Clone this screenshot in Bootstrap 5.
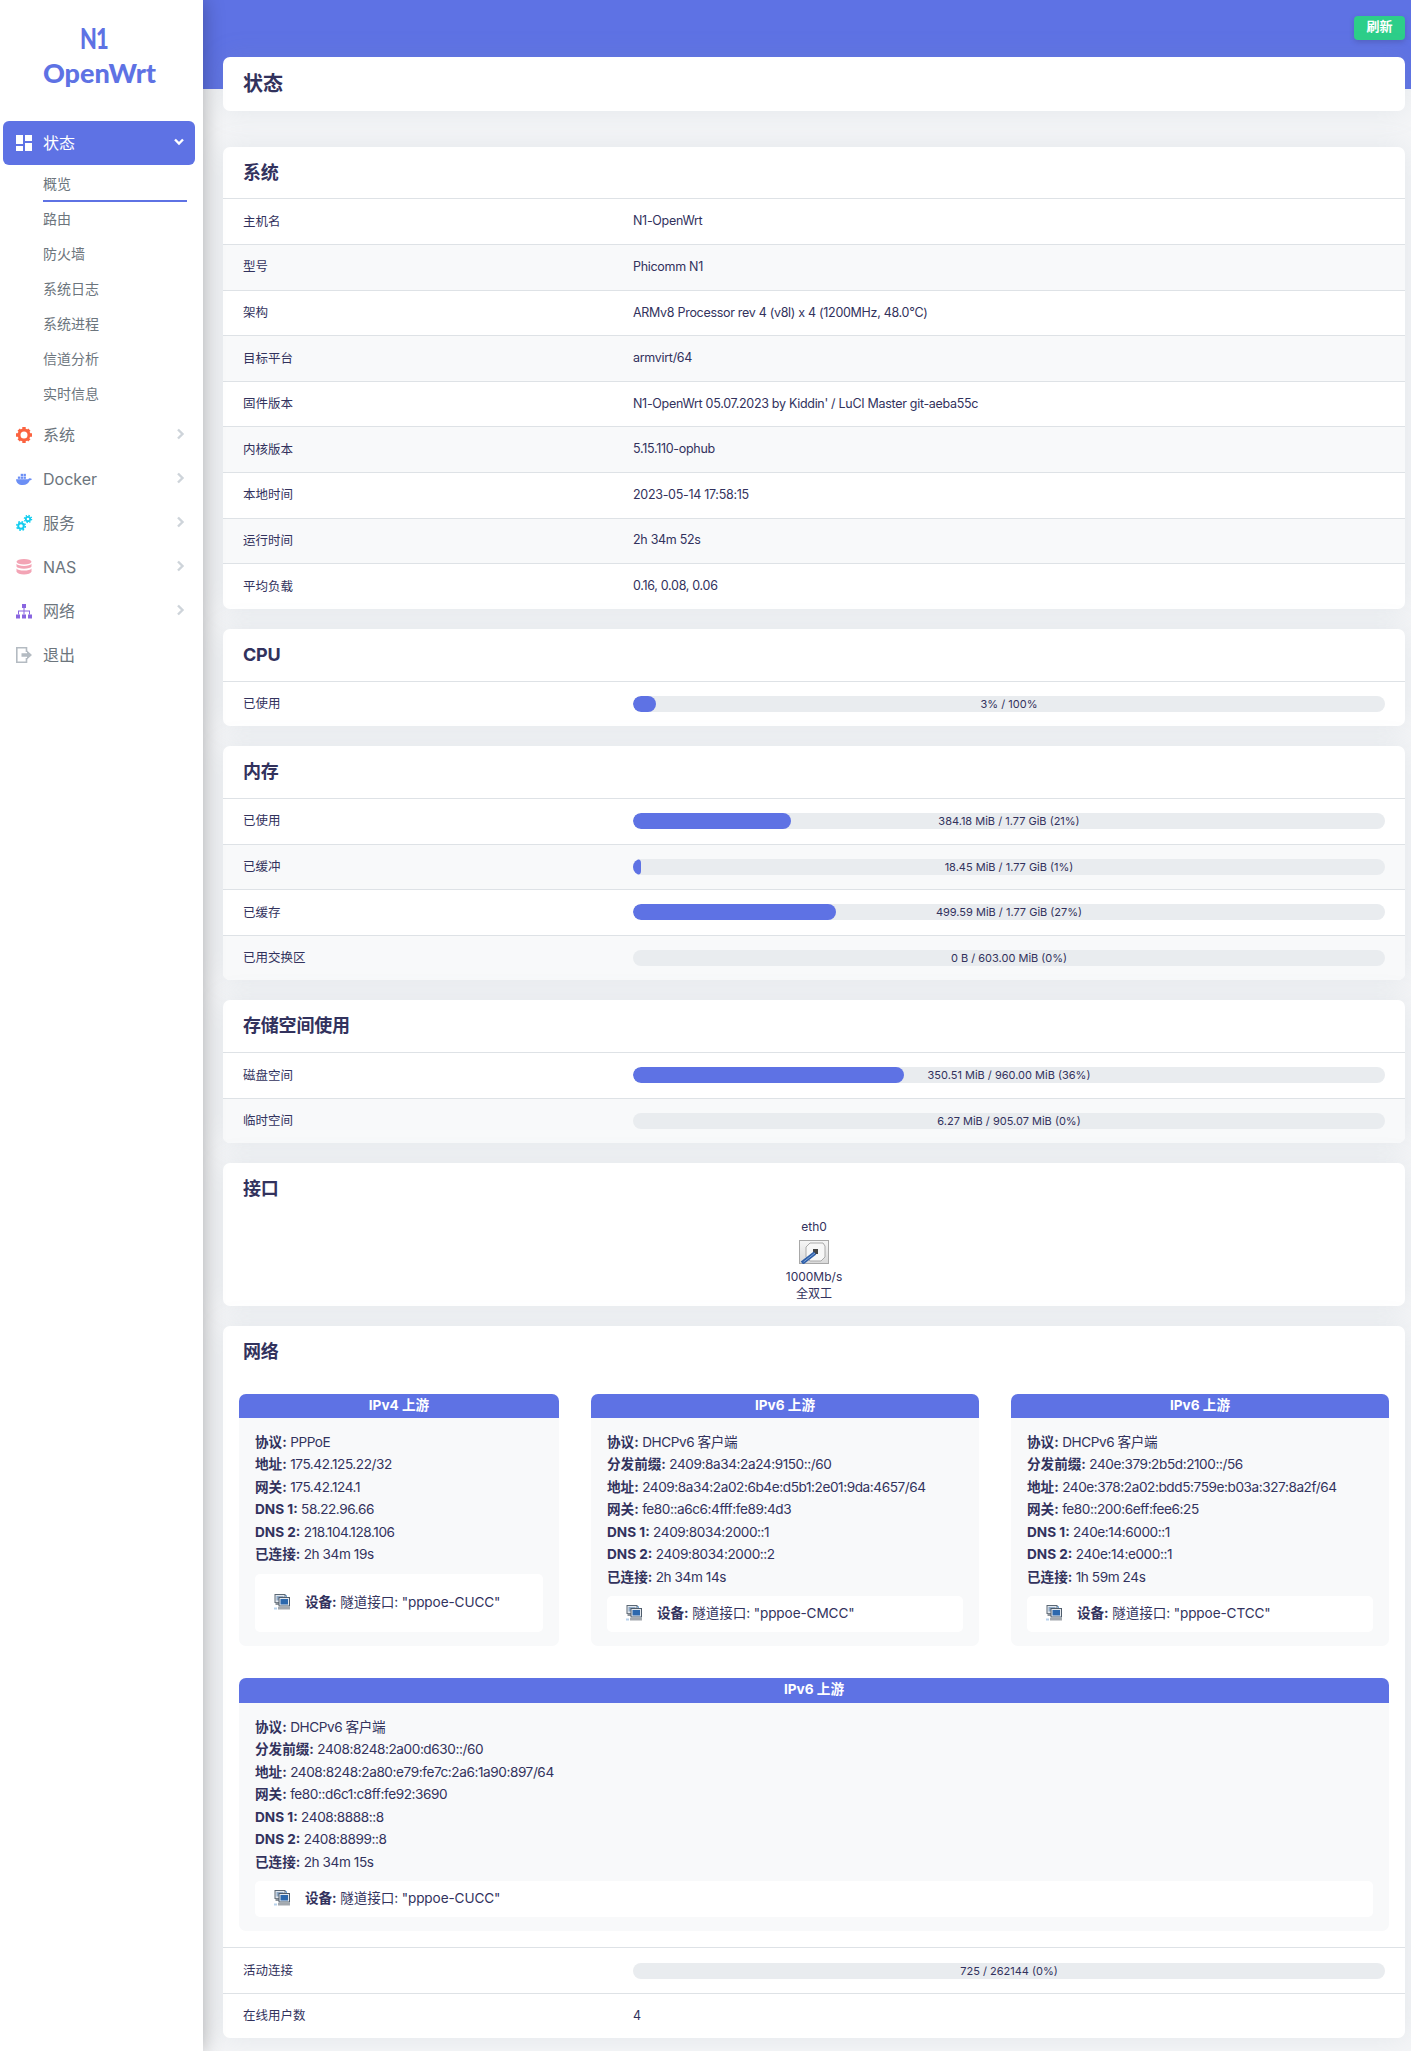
<!DOCTYPE html>
<html lang="zh-CN">
<head>
    <meta charset="UTF-8">
    <meta name="viewport" content="width=device-width, initial-scale=1.0">
    <title>N1-OpenWrt - 概览 - LuCI</title>
    <link href="https://cdn.jsdelivr.net/npm/bootstrap@5.3.0/dist/css/bootstrap.min.css" rel="stylesheet">
    <style>
        body {
            font-family: Inter, "Noto Sans CJK SC", sans-serif;
            background-color: #f4f5f7;
            color: #32325d;
            font-size: 12.5px;
            min-height: 2051px;
        }
        .side-panel {
            width: 203px;
            flex: none;
            background: #fff;
            box-shadow: 0 0 20px rgba(0, 0, 0, .3);
            z-index: 2;
        }
        .brand-box {
            height: 121px;
            padding-top: 24px;
            color: #5e72e4;
            font-family: Lato, "Noto Sans CJK SC", sans-serif;
            font-weight: 900;
            text-align: center;
            line-height: 1;
        }
        .brand-n1 { display: inline-block; font-size: 28px; letter-spacing: -1px; transform: scaleX(.78); margin-left: -16px; }
        .brand-name { font-size: 27px; margin-top: 7px; padding-right: 4px; }
        .side-link {
            display: flex;
            align-items: center;
            height: 44px;
            padding: 0 16px;
            color: #6c757d;
            font-size: 16px;
        }
        .side-link svg.side-icon { width: 16px; height: 16px; flex: none; margin-right: 11px; overflow: visible; }
        .side-link svg.side-arrow { width: 10px; height: 12px; margin-left: auto; margin-right: 2px; margin-top: -3px; }
        .side-link.active-group {
            margin: 0 8px 0 3px;
            padding: 0 9px 0 13px;
            background: #5e72e4;
            color: #fff;
            border-radius: 6px;
        }
        .sub-links { padding: 1px 0 2px 43px; }
        .sub-link {
            display: block;
            height: 35px;
            line-height: 35px;
            color: #6c757d;
            font-size: 14px;
        }
        .sub-link.current { width: 144px; height: 36px; margin-bottom: -1px; border-bottom: 2px solid #5e72e4; }
        .main-area {
            flex: 1 1 0;
            min-width: 0;
            padding: 16px 6px 13px 20px;
            background: linear-gradient(#5e72e4 89px, transparent 89px);
        }
        .refresh-btn {
            display: block;
            width: 51px;
            height: 24px;
            margin: 0 0 17px auto;
            padding: 0 0 2px;
            border: 0;
            border-radius: 4px;
            background: #2dce89;
            color: #fff;
            font-size: 13px;
            font-weight: 700;
            box-shadow: 0 2px 5px rgba(50, 50, 93, .25);
        }
        .panel {
            border: 0;
            border-radius: 7px;
            margin-bottom: 20px;
            box-shadow: 0 0 28px rgba(136, 152, 170, .15);
            overflow: hidden;
        }
        .page-title {
            height: 54px;
            margin-bottom: 35.6px;
            padding: 0 20px;
            font-size: 20px;
            font-weight: 700;
            line-height: 54px;
        }
        .panel-title {
            height: 51.8px;
            padding: 0 20px;
            font-size: 18px;
            font-weight: 700;
            line-height: 51.8px;
            letter-spacing: -.2px;
        }
        .info-row {
            display: flex;
            align-items: center;
            height: 45.6px;
            padding: 0 20px 0 20px;
            border-top: 1px solid #dee2e6;
        }
        .info-rows .info-row:nth-child(even) { background: #f8f9fa; }
        .info-key { width: 390px; flex: none; padding-top: 1px; }
        .info-val { flex: 1 1 0; min-width: 0; letter-spacing: -.3px; }
        .usage-bar {
            position: relative;
            height: 16px;
            border-radius: 8px;
            background: #e9ecef;
        }
        .usage-bar .progress-bar { background: #5e72e4; border-radius: 8px; }
        .usage-label {
            position: absolute;
            inset: 0;
            text-align: center;
            font-size: 11px;
            line-height: 16px;
            letter-spacing: 0;
        }
        .iface-box {
            height: 90.6px;
            padding-top: 3px;
            text-align: center;
            font-size: 12px;
            line-height: 17px;
        }
        .iface-box svg { display: block; width: 30px; height: 24px; margin: 5px auto 4px; }
        .wan-area { padding: 16.4px 16px 16px; display: flex; flex-wrap: wrap; gap: 32px; }
        .wan-box { display: flex; flex-direction: column; background: #f8f9fa; border-radius: 7px; overflow: hidden; }
        .wan-v4 { flex: 320 1 0; }
        .wan-v6a { flex: 388 1 0; }
        .wan-v6b { flex: 378 1 0; }
        .wan-full { flex: 0 0 100%; }
        .wan-head {
            height: 24px;
            background: #5e72e4;
            color: #fff;
            font-size: 13.6px;
            font-weight: 700;
            line-height: 22px;
            text-align: center;
        }
        .wan-full .wan-head { height: 25px; line-height: 22px; }
        .wan-body { flex: 1 1 auto; display: flex; flex-direction: column; padding: 13px 16px 14px; }
        .wan-line { font-size: 13.6px; line-height: 22.45px; white-space: nowrap; letter-spacing: -.42px; }
        .wan-line b { font-weight: 700; letter-spacing: 0; }
        .dev-box {
            flex: 1 1 auto;
            display: flex;
            align-items: center;
            min-height: 36px;
            margin-top: 8px;
            padding: 0 0 2px 19px;
            background: #fff;
            border-radius: 5px;
            font-size: 13.6px;
            letter-spacing: -.1px;
        }
        .dev-box svg { width: 16px; height: 16px; flex: none; margin-right: 15px; }
        .dev-box b { font-weight: 700; }
    </style>
</head>
<body>

<svg width="0" height="0" class="position-absolute">
    <symbol id="devIcon" viewBox="0 0 16 16">
        <path d="M11 1.500h1.500V4" fill="none" stroke="#6fa3d8"/>
        <rect x="1" y=".5" width="10" height="8" fill="#e4e9ef" stroke="#5c6875"/>
        <rect x="2.500" y="2" width="7" height="4.500" fill="#8fa9c6"/>
        <rect x="1.500" y="8.500" width="4" height="2.500" fill="#8d939a"/>
        <rect x="5" y="3.500" width="10.500" height="8.500" fill="#e4e9ef" stroke="#4f5c6b"/>
        <rect x="6.500" y="5" width="7.500" height="5.500" fill="#2c68ad"/>
        <rect x="4" y="13" width="12" height="2.500" fill="#a3a8ae"/>
        <path d="M0 13.500v2M2 13.500v2" stroke="#6fa3d8"/>
    </symbol>
</svg>

<div class="d-flex">
    <!-- Sidebar -->
    <nav class="side-panel">
        <div class="brand-box">
            <div class="brand-n1">N1</div>
            <div class="brand-name">OpenWrt</div>
        </div>
        <a class="side-link active-group text-decoration-none" href="#">
            <svg class="side-icon" viewBox="0 0 16 16" fill="#fff"><rect x="0" y="0" width="7" height="9"/><rect x="9" y="0" width="7" height="6"/><rect x="0" y="11" width="7" height="5"/><rect x="9" y="8" width="7" height="8"/></svg>
            状态
            <svg class="side-arrow" viewBox="0 0 10 12" fill="none" stroke="#fff" stroke-width="2.4"><path d="M1 3.500 5 7.500 9 3.500"/></svg>
        </a>
        <div class="sub-links">
            <a class="sub-link current text-decoration-none" href="#">概览</a>
            <a class="sub-link text-decoration-none" href="#">路由</a>
            <a class="sub-link text-decoration-none" href="#">防火墙</a>
            <a class="sub-link text-decoration-none" href="#">系统日志</a>
            <a class="sub-link text-decoration-none" href="#">系统进程</a>
            <a class="sub-link text-decoration-none" href="#">信道分析</a>
            <a class="sub-link text-decoration-none" href="#">实时信息</a>
        </div>
        <a class="side-link text-decoration-none" href="#">
            <svg class="side-icon" viewBox="0 0 16 16"><circle cx="8" cy="8" r="5" fill="none" stroke="#fb6340" stroke-width="3"/><path fill="#fb6340" d="M6.300 0h3.400v3H6.300zM6.300 13h3.400v3H6.300zM0 6.300h3v3.400H0zM13 6.300h3v3.400h-3zM1.500 3.800l2.300-2.300 2 2-2.300 2.300zM10.200 3.500l2-2 2.300 2.300-2 2zM1.500 12.200l2-2 2.300 2.300-2 2zM10.200 12.500l2-2 2.300 1.700-2.300 2.300z"/></svg>
            系统
            <svg class="side-arrow" viewBox="0 0 10 12" fill="none" stroke="#ced4da" stroke-width="2.4"><path d="M3 1.500 7.500 6 3 10.500"/></svg>
        </a>
        <a class="side-link text-decoration-none" href="#">
            <svg class="side-icon" viewBox="0 0 17 16" fill="#6c8ff5"><path d="M0 8.300h13c.4-.8.900-1.200 1.600-1.200.8 0 1.500.3 2.400.8-.5 1-1.300 1.400-2.300 1.500C13.500 12.800 11 14.500 7.200 14.500 2.800 14.500.3 12.200 0 8.300z"/><rect x="2" y="5.400" width="2.500" height="2.400"/><rect x="5" y="5.400" width="2.500" height="2.400"/><rect x="8" y="5.400" width="2.500" height="2.400"/><rect x="5" y="2.500" width="2.500" height="2.400"/><rect x="8" y="2.500" width="2.500" height="2.400"/></svg>
            Docker
            <svg class="side-arrow" viewBox="0 0 10 12" fill="none" stroke="#ced4da" stroke-width="2.4"><path d="M3 1.500 7.500 6 3 10.500"/></svg>
        </a>
        <a class="side-link text-decoration-none" href="#">
            <svg class="side-icon" viewBox="0 0 16 16" fill="none" stroke="#11cdef"><circle cx="5" cy="11" r="2.800" stroke-width="2"/><circle cx="5" cy="11" r="4.300" stroke-width="1.500" stroke-dasharray="1.700 1.680"/><circle cx="12" cy="4" r="2.200" stroke-width="1.800"/><circle cx="12" cy="4" r="3.600" stroke-width="1.300" stroke-dasharray="1.400 1.430"/></svg>
            服务
            <svg class="side-arrow" viewBox="0 0 10 12" fill="none" stroke="#ced4da" stroke-width="2.4"><path d="M3 1.500 7.500 6 3 10.500"/></svg>
        </a>
        <a class="side-link text-decoration-none" href="#">
            <svg class="side-icon" viewBox="0 0 16 16" fill="#f3a4b5"><ellipse cx="8" cy="2.800" rx="7.500" ry="2.800"/><path d="M.5 4.800c1 1.300 3.800 2.100 7.500 2.100s6.500-.8 7.500-2.100v2.700c-.6 1.300-3.600 2.200-7.500 2.200S1.100 8.800.5 7.500zM.5 9.400c1 1.300 3.800 2.100 7.500 2.100s6.500-.8 7.500-2.100v3.300c-.6 1.600-3.600 2.700-7.500 2.700S1.100 14.300.5 12.700z"/></svg>
            NAS
            <svg class="side-arrow" viewBox="0 0 10 12" fill="none" stroke="#ced4da" stroke-width="2.4"><path d="M3 1.500 7.500 6 3 10.500"/></svg>
        </a>
        <a class="side-link text-decoration-none" href="#">
            <svg class="side-icon" viewBox="0 0 16 16" fill="#8965e0"><rect x="6" y="1" width="4" height="4"/><rect x="0" y="11.500" width="4" height="4"/><rect x="6" y="11.500" width="4" height="4"/><rect x="12" y="11.500" width="4" height="4"/><path d="M7.500 5h1v2.500h5.500v4h-1V8.500H8.500v3h-1v-3H3v3H2v-4h5.500z"/></svg>
            网络
            <svg class="side-arrow" viewBox="0 0 10 12" fill="none" stroke="#ced4da" stroke-width="2.4"><path d="M3 1.500 7.500 6 3 10.500"/></svg>
        </a>
        <a class="side-link text-decoration-none" href="#">
            <svg class="side-icon" viewBox="0 0 16 16" fill="none" stroke="#b4bbc2" stroke-width="1.600"><path d="M10.500 5V.8H.8v14.400h9.700V11"/><path fill="#b4bbc2" stroke="none" d="M5.500 6.300h5.500V3.500L16 8l-5 4.500V9.700H5.500z"/></svg>
            退出
        </a>
    </nav>

    <!-- Main content -->
    <main class="main-area">
        <button type="button" class="refresh-btn">刷新</button>

        <div class="card panel page-title">状态</div>

        <div class="card panel">
            <div class="panel-title">系统</div>
            <div class="info-rows">
                <div class="info-row"><div class="info-key">主机名</div><div class="info-val">N1-OpenWrt</div></div>
                <div class="info-row"><div class="info-key">型号</div><div class="info-val">Phicomm N1</div></div>
                <div class="info-row"><div class="info-key">架构</div><div class="info-val">ARMv8 Processor rev 4 (v8l) x 4 (1200MHz, 48.0°C)</div></div>
                <div class="info-row"><div class="info-key">目标平台</div><div class="info-val">armvirt/64</div></div>
                <div class="info-row"><div class="info-key">固件版本</div><div class="info-val">N1-OpenWrt 05.07.2023 by Kiddin' / LuCI Master git-aeba55c</div></div>
                <div class="info-row"><div class="info-key">内核版本</div><div class="info-val">5.15.110-ophub</div></div>
                <div class="info-row"><div class="info-key">本地时间</div><div class="info-val">2023-05-14 17:58:15</div></div>
                <div class="info-row"><div class="info-key">运行时间</div><div class="info-val">2h 34m 52s</div></div>
                <div class="info-row"><div class="info-key">平均负载</div><div class="info-val">0.16, 0.08, 0.06</div></div>
            </div>
        </div>

        <div class="card panel">
            <div class="panel-title">CPU</div>
            <div class="info-rows">
                <div class="info-row"><div class="info-key">已使用</div><div class="info-val"><div class="progress usage-bar"><div class="progress-bar" style="width:3%"></div><div class="usage-label">3% / 100%</div></div></div></div>
            </div>
        </div>

        <div class="card panel">
            <div class="panel-title">内存</div>
            <div class="info-rows">
                <div class="info-row"><div class="info-key">已使用</div><div class="info-val"><div class="progress usage-bar"><div class="progress-bar" style="width:21%"></div><div class="usage-label">384.18 MiB / 1.77 GiB (21%)</div></div></div></div>
                <div class="info-row"><div class="info-key">已缓冲</div><div class="info-val"><div class="progress usage-bar"><div class="progress-bar" style="width:1%"></div><div class="usage-label">18.45 MiB / 1.77 GiB (1%)</div></div></div></div>
                <div class="info-row"><div class="info-key">已缓存</div><div class="info-val"><div class="progress usage-bar"><div class="progress-bar" style="width:27%"></div><div class="usage-label">499.59 MiB / 1.77 GiB (27%)</div></div></div></div>
                <div class="info-row"><div class="info-key">已用交换区</div><div class="info-val"><div class="progress usage-bar"><div class="usage-label">0 B / 603.00 MiB (0%)</div></div></div></div>
            </div>
        </div>

        <div class="card panel">
            <div class="panel-title">存储空间使用</div>
            <div class="info-rows">
                <div class="info-row"><div class="info-key">磁盘空间</div><div class="info-val"><div class="progress usage-bar"><div class="progress-bar" style="width:36%"></div><div class="usage-label">350.51 MiB / 960.00 MiB (36%)</div></div></div></div>
                <div class="info-row"><div class="info-key">临时空间</div><div class="info-val"><div class="progress usage-bar"><div class="usage-label">6.27 MiB / 905.07 MiB (0%)</div></div></div></div>
            </div>
        </div>

        <div class="card panel">
            <div class="panel-title">接口</div>
            <div class="iface-box">
                eth0
                <svg viewBox="0 0 30 24">
                    <defs><linearGradient id="ifaceBg" x1="0" y1="0" x2="0" y2="1"><stop offset="0" stop-color="#f6f6f6"/><stop offset="1" stop-color="#d9d9d9"/></linearGradient></defs>
                    <rect x=".5" y=".5" width="29" height="23" fill="url(#ifaceBg)" stroke="#a8a8a8"/>
                    <path d="M7 7l4-4h13l2 3v11l-4 4H11l-4-4z" fill="#f7f7f7" stroke="#aaa"/>
                    <path d="M14 9h5v5h-5z" fill="#444"/>
                    <path d="M3 23 16 13" stroke="#2f5fa8" stroke-width="4"/>
                    <path d="M4.500 22 16 13" stroke="#7ea6dc" stroke-width="1"/>
                </svg>
                1000Mb/s<br>全双工
            </div>
        </div>

        <div class="card panel mb-0">
            <div class="panel-title">网络</div>
            <div class="wan-area">
                <div class="wan-box wan-v4">
                    <div class="wan-head">IPv4 上游</div>
                    <div class="wan-body">
                        <div class="wan-line"><b>协议:</b> PPPoE</div>
                        <div class="wan-line"><b>地址:</b> 175.42.125.22/32</div>
                        <div class="wan-line"><b>网关:</b> 175.42.124.1</div>
                        <div class="wan-line"><b>DNS 1:</b> 58.22.96.66</div>
                        <div class="wan-line"><b>DNS 2:</b> 218.104.128.106</div>
                        <div class="wan-line"><b>已连接:</b> 2h 34m 19s</div>
                        <div class="dev-box">
                            <svg><use href="#devIcon"/></svg>
                            <span><b>设备:</b> 隧道接口: "pppoe-CUCC"</span>
                        </div>
                    </div>
                </div>
                <div class="wan-box wan-v6a">
                    <div class="wan-head">IPv6 上游</div>
                    <div class="wan-body">
                        <div class="wan-line"><b>协议:</b> DHCPv6 客户端</div>
                        <div class="wan-line"><b>分发前缀:</b> 2409:8a34:2a24:9150::/60</div>
                        <div class="wan-line"><b>地址:</b> 2409:8a34:2a02:6b4e:d5b1:2e01:9da:4657/64</div>
                        <div class="wan-line"><b>网关:</b> fe80::a6c6:4fff:fe89:4d3</div>
                        <div class="wan-line"><b>DNS 1:</b> 2409:8034:2000::1</div>
                        <div class="wan-line"><b>DNS 2:</b> 2409:8034:2000::2</div>
                        <div class="wan-line"><b>已连接:</b> 2h 34m 14s</div>
                        <div class="dev-box">
                            <svg><use href="#devIcon"/></svg>
                            <span><b>设备:</b> 隧道接口: "pppoe-CMCC"</span>
                        </div>
                    </div>
                </div>
                <div class="wan-box wan-v6b">
                    <div class="wan-head">IPv6 上游</div>
                    <div class="wan-body">
                        <div class="wan-line"><b>协议:</b> DHCPv6 客户端</div>
                        <div class="wan-line"><b>分发前缀:</b> 240e:379:2b5d:2100::/56</div>
                        <div class="wan-line"><b>地址:</b> 240e:378:2a02:bdd5:759e:b03a:327:8a2f/64</div>
                        <div class="wan-line"><b>网关:</b> fe80::200:6eff:fee6:25</div>
                        <div class="wan-line"><b>DNS 1:</b> 240e:14:6000::1</div>
                        <div class="wan-line"><b>DNS 2:</b> 240e:14:e000::1</div>
                        <div class="wan-line"><b>已连接:</b> 1h 59m 24s</div>
                        <div class="dev-box">
                            <svg><use href="#devIcon"/></svg>
                            <span><b>设备:</b> 隧道接口: "pppoe-CTCC"</span>
                        </div>
                    </div>
                </div>
                <div class="wan-box wan-full">
                    <div class="wan-head">IPv6 上游</div>
                    <div class="wan-body">
                        <div class="wan-line"><b>协议:</b> DHCPv6 客户端</div>
                        <div class="wan-line"><b>分发前缀:</b> 2408:8248:2a00:d630::/60</div>
                        <div class="wan-line"><b>地址:</b> 2408:8248:2a80:e79:fe7c:2a6:1a90:897/64</div>
                        <div class="wan-line"><b>网关:</b> fe80::d6c1:c8ff:fe92:3690</div>
                        <div class="wan-line"><b>DNS 1:</b> 2408:8888::8</div>
                        <div class="wan-line"><b>DNS 2:</b> 2408:8899::8</div>
                        <div class="wan-line"><b>已连接:</b> 2h 34m 15s</div>
                        <div class="dev-box">
                            <svg><use href="#devIcon"/></svg>
                            <span><b>设备:</b> 隧道接口: "pppoe-CUCC"</span>
                        </div>
                    </div>
                </div>
            </div>
            <div class="info-row"><div class="info-key">活动连接</div><div class="info-val"><div class="progress usage-bar"><div class="usage-label">725 / 262144 (0%)</div></div></div></div>
            <div class="info-row"><div class="info-key">在线用户数</div><div class="info-val">4</div></div>
        </div>
    </main>
</div>

<script src="https://cdn.jsdelivr.net/npm/bootstrap@5.3.0/dist/js/bootstrap.bundle.min.js"></script>
</body>
</html>
